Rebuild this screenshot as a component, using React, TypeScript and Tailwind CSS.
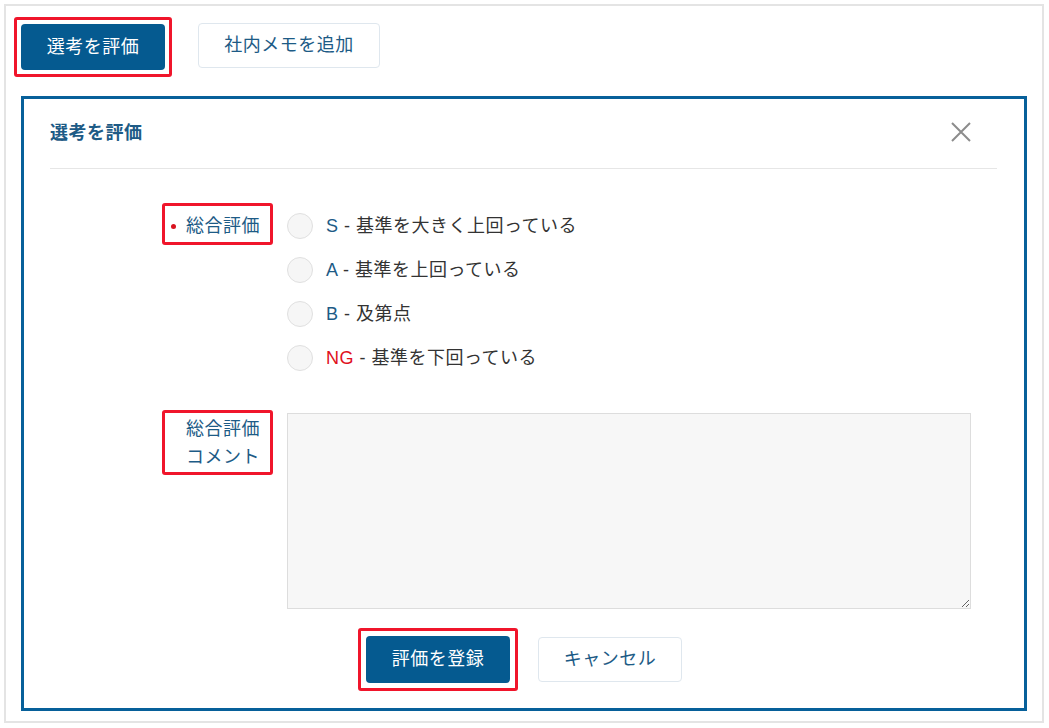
const font = { fontFamily: '"Liberation Sans", "Noto Sans CJK JP", sans-serif' }

const options = [
  { grade: 'S', label: '基準を大きく上回っている', danger: false },
  { grade: 'A', label: '基準を上回っている', danger: false },
  { grade: 'B', label: '及第点', danger: false },
  { grade: 'NG', label: '基準を下回っている', danger: true },
]

function Highlight({ children, className = '' }: { children: React.ReactNode; className?: string }) {
  return <div className={`border-[3px] border-[#f0152b] rounded-[3px] ${className}`}>{children}</div>
}

export default function App() {
  return (
    <div className="bg-white w-full h-[728px] p-[4px] text-[18px] tracking-[0.5px]" style={font}>
      <div className="w-[1040px] h-[719px] border-2 border-[#e4e4e4]">
        {/* top actions */}
        <div className="flex items-center mt-[11px] ml-[8px]">
          <Highlight className="p-[4px]">
            <button className="w-[144px] h-[46px] rounded-[4px] bg-[#055a90] text-white">選考を評価</button>
          </Highlight>
          <button className="ml-[26px] w-[182px] h-[45px] rounded-[4px] border border-[#dfe7ee] bg-white text-[#1d5b86] -mt-[3px]">
            社内メモを追加
          </button>
        </div>

        {/* evaluation panel */}
        <div className="mt-[19px] mx-[15px] border-[3px] border-[#07609a] pb-[17px]">
          <div className="h-[70px] ml-[26px] mr-[27px] border-b border-[#e6e6e6] flex items-center justify-between">
            <h2 className="font-bold text-[#1d5b86] -mt-[1px]">選考を評価</h2>
            <button className="mr-[26px] -mt-[4px]" aria-label="閉じる">
              <svg width="20" height="20" viewBox="0 0 20 20" fill="none" stroke="#8c8c8c" strokeWidth="2">
                <path d="M1 1 L19 19 M19 1 L1 19" />
              </svg>
            </button>
          </div>

          {/* overall grade */}
          <div className="flex items-start pt-[35px]">
            <div className="w-[249px] flex items-start justify-end">
              <Highlight className="w-[111px] -mt-[1px] pt-[8px] pb-[4px] pr-[10px] pl-[6px] flex items-center justify-between">
                <span className="w-[5px] h-[5px] rounded-full bg-[#d9131f]" />
                <span className="leading-[24px] text-[#1d5b86]">総合評価</span>
              </Highlight>
            </div>
            <div className="ml-[14px]">
              {options.map((o) => (
                <label key={o.grade} className="h-[44px] flex items-center cursor-pointer">
                  <span className="w-[26px] h-[26px] rounded-full border border-[#e0e0e0] bg-[#f6f6f6]" />
                  <span className="ml-[13px] text-[#333333]">
                    <span className={o.danger ? 'text-[#e0101c]' : 'text-[#1d5b86]'}>{o.grade}</span> - {o.label}
                  </span>
                </label>
              ))}
            </div>
          </div>

          {/* comment */}
          <div className="flex items-start mt-[33px]">
            <div className="w-[249px] flex items-start justify-end">
              <Highlight className="w-[111px] -mt-[3px] pt-[2px] pr-[10px] text-right leading-[29px] text-[#1d5b86]">
                <div>総合評価</div>
                <div className="-mt-[1px]">コメント</div>
              </Highlight>
            </div>
            <textarea className="ml-[14px] w-[684px] h-[196px] bg-[#f7f7f7] border border-[#dddddd] outline-none p-2 text-[16px]" />
          </div>

          {/* submit */}
          <div className="flex items-center mt-[19px] pl-[334px]">
            <Highlight className="p-[5px]">
              <button className="w-[144px] h-[47px] rounded-[4px] bg-[#055a90] text-white">評価を登録</button>
            </Highlight>
            <button className="ml-[20px] w-[144px] h-[45px] rounded-[4px] border border-[#dfe7ee] bg-white text-[#1d5b86]">
              キャンセル
            </button>
          </div>
        </div>
      </div>
    </div>
  )
}
